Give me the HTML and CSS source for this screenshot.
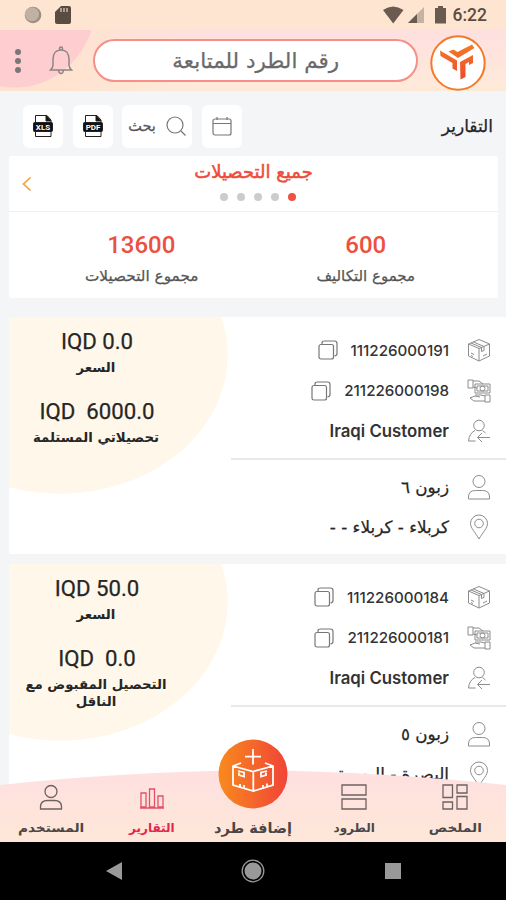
FILE: index.html
```html
<!DOCTYPE html>
<html lang="ar" dir="rtl">
<head>
<meta charset="utf-8">
<title>التقارير</title>
<link rel="stylesheet" href="styles.css">
</head>
<body>
<svg width="0" height="0" class="defs">
  <defs>
    <linearGradient id="brand" x1="0" x2="1" y1="0" y2="0"><stop offset="0" stop-color="#f98a1d"/><stop offset="1" stop-color="#f04438"/></linearGradient>
    <linearGradient id="mark" x1="0" x2="0" y1="0" y2="1"><stop offset="0" stop-color="#f47b27"/><stop offset="1" stop-color="#ee4a2c"/></linearGradient>
    <linearGradient id="navbg" x1="0" x2="0" y1="0" y2="1"><stop offset="0" stop-color="#fee0e0"/><stop offset="1" stop-color="#fee7d8"/></linearGradient>
  </defs>
  <symbol id="copy" viewBox="0 0 20 20"><rect x="1" y="4.5" width="14.500" height="14.500" rx="2"/><path d="M4 4V3q0-2 2.500-2h10q2.500 0 2.500 2.500v10q0 2-2.500 2.500"/></symbol>
  <symbol id="box" viewBox="0 0 24 24"><path d="M12 1.500 22.500 6v12L12 23 1.500 18V6zM1.500 6 12 10.500 22.500 6M12 10.500V23M6.500 4l10.500 4.500v4l-2.500 1V9.500L4 5M4 15l3 1.500M4 17.500l2 1M16 18l4-2"/></symbol>
  <symbol id="cash" viewBox="0 0 24 24"><path d="M1 1h5v8H1zM6 2h6l4 3M6 8l4 1M8 5h15v9H8zM10 7h11v5H10zM13 18l-5-1-5 2 4 3h11M18 16h5v7h-5zM8 16h6l4 1"/><circle cx="15.500" cy="9.500" r="2.500"/></symbol>
  <symbol id="sender" viewBox="0 0 24 24"><circle cx="12" cy="6.500" r="5.300"/><path d="M8 11.500C4 13.500 2 17 1.500 22h7M15.500 11.500l3 2.500M23 18.500H10.500M15 14l-4.500 4.500L15 23"/></symbol>
  <symbol id="person" viewBox="0 0 24 26"><circle cx="12" cy="7.500" r="6"/><path d="M1.500 25v-2q0-6.500 7-6.500h7q7 0 7 6.500v2z"/></symbol>
  <symbol id="pin" viewBox="0 0 24 26"><path d="M12 25C8 18 3.500 14 3.500 9.500a8.500 8.500 0 0 1 17 0C20.500 14 16 18 12 25z"/><circle cx="12" cy="9.500" r="4.300"/></symbol>
</svg>
<div class="phone">
  <header class="top">
    <div class="status">
      <span class="clock">6:22</span>
      <svg class="st-right" viewBox="0 0 64 18" width="64" height="18"><path d="M0 4Q10-3 20.500 4L10.200 17.500z" fill="#6b5a50"/><path d="M41 1v16H25z" fill="#c6b2a2"/><path d="M34 8v9h-9z" fill="#6b5a50"/><path d="M52 2h3V0h5v2h3v15.500H52z" fill="#6b5a50"/></svg>
      <svg class="st-left" viewBox="0 0 48 20" width="48" height="20"><circle cx="9" cy="10" r="8.300" fill="#9c8d80"/><circle cx="8" cy="9.200" r="7" fill="#bfb1a3"/><path d="M37 1h8q2 0 2 2v14q0 2-2 2H33q-2 0-2-2V7z" fill="#5b4c43"/><path d="M37 3v4M40 3v4M43 3v4" stroke="#c9b7a7" stroke-width="1.500"/></svg>
    </div>
    <div class="bar">
      <svg class="logo" viewBox="0 0 56 56" width="56" height="56"><circle cx="28" cy="28" r="26.700" fill="#fff" stroke="#f27a2a" stroke-width="2"/><path d="M10 15.500 27 25.500V36l-4.500-2.500V28L10.500 21zM18.500 16.500l5-2 4 2.500L42 9.500l2.500 3.500L28 23zM30 27l13-7v8l-4 2v-3l-3.500 2v13l-5 2.500z" fill="url(#mark)"/></svg>
      <div class="search"><span class="t">رقم الطرد للمتابعة</span></div>
      <svg class="bell" viewBox="0 0 24 30" width="24" height="30"><path d="M12 4C6.500 4 4 8 4 13v6q0 3-2.500 5h21Q20 22 20 19v-6c0-5-2.500-9-8-9zM10.500 4V2.500q0-1.500 1.500-1.500t1.500 1.500V4M9.500 24.500q.5 3 2.500 3t2.500-3"/></svg>
      <span class="dots"><i></i><i></i><i></i></span>
    </div>
  </header>

  <main class="content">
    <div class="tools">
      <h1><span class="t">التقارير</span></h1>
      <div class="btns">
        <button class="sq"><svg class="line" viewBox="0 0 20 20" width="20" height="20"><rect x="1" y="3" width="18" height="16" rx="2"/><path d="M1 7.500h18M5 1v3M15 1v3"/></svg></button>
        <button class="find"><svg class="line" viewBox="0 0 20 20" width="20" height="20"><circle cx="9" cy="9" r="8"/><path d="m15 15 4.500 4.500"/></svg><span class="t">بحث</span></button>
        <button class="sq"><svg class="file" viewBox="0 0 20 24" width="20" height="24"><path d="M2.500 9V1.500H14L18 6v3M2.500 17v5.500H18V17" fill="none"/><path d="M13 1v6h5z"/><rect x=".5" y="8.500" width="19" height="9" rx="1"/><text x="10" y="16">PDF</text></svg></button>
        <button class="sq"><svg class="file" viewBox="0 0 20 24" width="20" height="24"><path d="M2.500 9V1.500H14L18 6v3M2.500 17v5.500H18V17" fill="none"/><path d="M13 1v6h5z"/><rect x=".5" y="8.500" width="19" height="9" rx="1"/><text x="10" y="16">XLS</text></svg></button>
      </div>
    </div>

    <section class="summary">
      <div class="slide">
        <h2><span class="t">جميع التحصيلات</span></h2>
        <div class="pager"><i class="on"></i><i></i><i></i><i></i><i></i></div>
        <svg class="next" viewBox="0 0 10 16" width="10" height="16"><path d="M8.500 1.500 1.500 8l7 6.500"/></svg>
      </div>
      <div class="totals">
        <div><b>600</b><span class="t cost">مجموع التكاليف</span></div>
        <div><b>13600</b><span class="t coll">مجموع التحصيلات</span></div>
      </div>
    </section>

    <article class="card">
      <div class="info">
        <div class="row"><svg class="ic"><use href="#box"/></svg><span class="num">111226000191</span><svg class="cp"><use href="#copy"/></svg></div>
        <div class="row"><svg class="ic"><use href="#cash"/></svg><span class="num">211226000198</span><svg class="cp"><use href="#copy"/></svg></div>
        <div class="row"><svg class="ic"><use href="#sender"/></svg><span class="name">Iraqi Customer</span></div>
        <hr>
        <div class="row"><svg class="ic tall"><use href="#person"/></svg><span class="t who">زبون ٦</span></div>
        <div class="row"><svg class="ic tall"><use href="#pin"/></svg><span class="t where">كربلاء - كربلاء - -</span></div>
      </div>
      <div class="price">
        <b dir="ltr">IQD 0.0</b><span class="t cap">السعر</span>
        <b dir="ltr" class="second">IQD&nbsp; 6000.0</b><span class="t long">تحصيلاتي المستلمة</span>
      </div>
    </article>

    <article class="card">
      <div class="info">
        <div class="row"><svg class="ic"><use href="#box"/></svg><span class="num">111226000184</span><svg class="cp"><use href="#copy"/></svg></div>
        <div class="row"><svg class="ic"><use href="#cash"/></svg><span class="num">211226000181</span><svg class="cp"><use href="#copy"/></svg></div>
        <div class="row"><svg class="ic"><use href="#sender"/></svg><span class="name">Iraqi Customer</span></div>
        <hr>
        <div class="row"><svg class="ic tall"><use href="#person"/></svg><span class="t who">زبون ٥</span></div>
        <div class="row"><svg class="ic tall"><use href="#pin"/></svg><span class="t where">البصرة - البصرة</span></div>
      </div>
      <div class="price">
        <b dir="ltr">IQD 50.0</b><span class="t cap">السعر</span>
        <b dir="ltr" class="second">IQD&nbsp; 0.0</b><span class="t long">التحصيل المقبوض مع<br>الناقل</span>
      </div>
    </article>
  </main>

  <nav class="tabs">
    <svg class="wave" viewBox="0 0 506 72" width="506" height="72"><path d="M0 15Q120 2 253 0 386 2 506 15V72H0z" fill="url(#navbg)"/></svg>
    <a class="tab"><svg viewBox="0 0 26 26" width="26" height="26"><path d="M1 1h9.500v12.500H1zM15 1h10v8H15zM1 18h9.500v7H1zM15 12.500h10V25H15z"/></svg><span class="t wide">الملخص</span></a>
    <a class="tab"><svg viewBox="0 0 26 26" width="26" height="26"><path d="M1 1h24v10H1zM1 15h24v10H1z"/></svg><span class="t">الطرود</span></a>
    <a class="tab add"><svg class="fab" viewBox="0 0 70 70" width="70" height="70"><circle cx="35" cy="35" r="34.500" fill="url(#brand)"/><path d="M35 10v15.500M27 17.700h16M23 24l-8 3v19l20.500 6L55 46V27l-8-3M15 27l20 5.500L55 27M35.300 32.500V52M20 32l6 1.500v4L21 36v-2.500M49 32l-6 1.500v4l5-1.500v-2.500M22 45v2.500M26 46v2.500M45 46v2.500M49 44.500V47" fill="none" stroke="#fff" stroke-width="1.800"/></svg><span class="t">إضافة طرد</span></a>
    <a class="tab active"><svg viewBox="0 0 26 26" width="26" height="26"><path d="M2 9h5v14H2zM10.500 5h5v18h-5zM19 12h5v11h-5zM1 24h24"/></svg><span class="t">التقارير</span></a>
    <a class="tab"><svg viewBox="0 0 24 26" width="24" height="26"><use href="#person"/></svg><span class="t wide">المستخدم</span></a>
  </nav>

  <footer class="system" dir="ltr">
    <svg viewBox="0 0 16 18" width="16" height="18"><path d="M16 0v18L0 9z" fill="#999"/></svg>
    <svg viewBox="0 0 24 24" width="24" height="24"><circle cx="12" cy="12" r="10.800" fill="none" stroke="#999" stroke-width="1.300"/><circle cx="12" cy="12" r="8.500" fill="#999"/></svg>
    <svg viewBox="0 0 16 16" width="16" height="16"><path d="M0 0h16v16H0z" fill="#999"/></svg>
  </footer>
</div>
</body>
</html>
```

FILE: styles.css
```css
* { box-sizing: border-box; }
body { margin: 0; font-family: Roboto, "DejaVu Sans", sans-serif; color: #262626; }
.defs { position: absolute; }
.t { font-family: "DejaVu Sans", sans-serif; white-space: nowrap; display: inline-block; -webkit-text-stroke: .25px currentColor; }
i, b { font-style: normal; display: block; }
.phone { width: 506px; height: 900px; display: flex; flex-direction: column; overflow: hidden; background: #f3f5f7; position: relative; }

.top { height: 91px; flex: none; }
.status { height: 30px; background: #fee5d2; display: flex; align-items: center; padding: 0 19px 0 24px; }
.clock { font-size: 17.500px; font-weight: 500; color: #5b4c43; }
.st-right { margin-right: 6px; }
.st-left { margin-right: auto; }
.bar { height: 61px; display: flex; align-items: center; padding: 0 20px 0 15px;
  background: radial-gradient(ellipse 82px 88px at 15px -30px, #fecdd0 99%, transparent 100%), linear-gradient(90deg, #fee3d0 0 60px, #fee3d000 200px), linear-gradient(180deg, #fee0df, #feead9); }
.logo { margin-top: 5px; flex: none; }
.search { width: 325px; height: 43px; margin-right: 12px; border: 2px solid #f58f88; border-radius: 22px; background: #fff; display: flex; align-items: center; justify-content: center; color: #696969; font-size: 21px; }
.search .t { transform: scaleX(1.02); }
.bell { margin-right: 20px; fill: none; stroke: #8e8583; stroke-width: 1.500; }
.dots { margin-right: auto; display: grid; gap: 3px; }
.dots i { width: 6px; height: 6px; border-radius: 50%; background: #7b7778; }

.content { flex: 1; min-height: 0; overflow: hidden; padding-left: 9px; }
.tools { height: 65px; display: flex; justify-content: space-between; align-items: center; padding: 5px 13px 0 14px; }
h1 { margin: 0; font-size: 17px; font-weight: 400; color: #222; }
.btns { display: flex; gap: 9.500px; }
button { border: 0; padding: 0; height: 43px; background: #fff; border-radius: 6px; display: flex; align-items: center; justify-content: center; gap: 10px; font-size: 14.500px; color: #555; }
.sq { width: 40px; }
.find { width: 70px; }
.line { fill: none; stroke: #777; stroke-width: 1.200; }
.file { stroke: #222; stroke-width: 1; fill: #111; }
.file text { font: bold 8px Roboto, sans-serif; fill: #fff; stroke: none; text-anchor: middle; direction: ltr; }

.summary { height: 142px; margin-right: 8px; background: #fff; border-radius: 3px; }
.slide { position: relative; height: 56px; border-bottom: 1.500px solid #eef0f1; text-align: center; }
h2 { margin: 0; font-size: 18px; line-height: 32px; height: 37px; font-weight: 400; color: #ee4b3c; }
h2 .t { -webkit-text-stroke-width: .5px; }
.pager { display: flex; justify-content: center; gap: 9px; padding-left: 9px; }
.pager i { width: 8px; height: 8px; border-radius: 50%; background: #ccc; }
.pager .on { background: #ee5243; }
.next { position: absolute; left: 13px; top: 20px; fill: none; stroke: #f3a13a; stroke-width: 1.700; }
.totals { display: grid; grid-template-columns: 1fr 1fr; padding: 18px 20px 0 20px; text-align: center; }
.totals b { font-size: 24px; line-height: 30px; font-weight: 500; color: #ee5040; }
.totals .t { font-size: 15px; line-height: 32px; color: #555; }
.coll { transform: scaleX(1.02); }

.card { height: 237px; display: flex; background: radial-gradient(ellipse 168px 139px at 51px 38px, #fff7e9 99.500%, #fff0 100%) #fff; }
.summary + .card { margin-top: 19px; }
.card + .card { margin-top: 10px; height: 260px; }
.info { width: 275px; padding-top: 13px; }
.row { height: 40.500px; display: flex; align-items: center; padding-right: 15px; }
.ic { width: 24px; height: 24px; fill: none; stroke: #8c8c8c; stroke-width: 1; margin-left: 18px; flex: none; }
.ic.tall { height: 26px; }
.cp { width: 20px; height: 20px; fill: none; stroke: #777; stroke-width: 1.200; margin-right: 13px; }
.num { font: 500 15.150px Inter, sans-serif; color: #333; }
.name { font: 600 16.800px Inter, sans-serif; color: #333; }
.who, .where { font-size: 16.800px; }
hr { height: 2px; border: 0; margin: 6px 0 7px; background: #e9e9ea; }
.price { width: 174px; margin-right: auto; text-align: center; padding-top: 10px; }
.price b { font-size: 22.200px; line-height: 28px; font-weight: 400; -webkit-text-stroke: .25px currentColor; transform: translateX(1px); }
.price .t { display: block; font-size: 13.300px; font-weight: 700; line-height: 17px; margin-top: 4px; -webkit-text-stroke: 0; }
.price .second { margin-top: 21px; }

.tabs { position: absolute; left: 0; bottom: 58px; width: 506px; height: 72px; display: flex; }
.wave { position: absolute; inset: 0; }
.tab { position: relative; flex: 1 1 0; min-width: 0; display: flex; flex-direction: column; align-items: center; justify-content: flex-end; color: #4d4646; }
.tab svg { flex: none; fill: none; stroke: #6d6262; stroke-width: 1.300; }
.tab .fab { stroke: none; }
.tab .t { font-size: 12px; font-weight: 700; line-height: 18px; margin: 9px 0 5px; -webkit-text-stroke: 0; }
.tab .wide { transform: scaleX(1.14); }
.tab.add .t { margin-top: 10px; font-size: 14.500px; }
.tab.active { color: #e2274b; }
.tab.active svg { stroke: #e2506a; }

.system { height: 58px; flex: none; background: #000; display: grid; grid-template-columns: 227px 52px 227px; align-items: center; justify-items: center; }
```
